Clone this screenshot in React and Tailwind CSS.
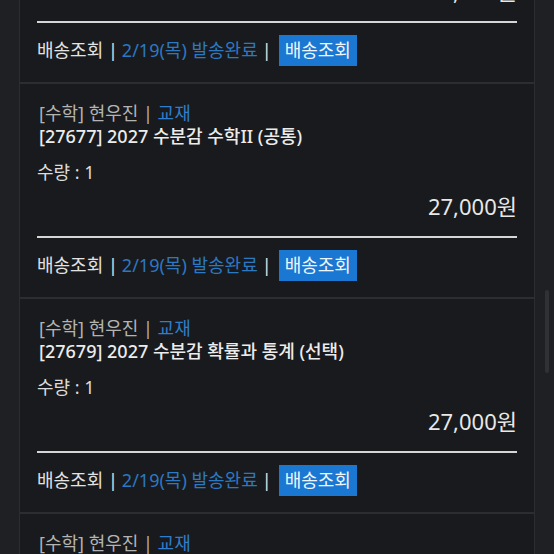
import React from 'react';

const orders = [
  { code: '27676', name: '2027 수분감 수학I (공통)' },
  { code: '27677', name: '2027 수분감 수학II (공통)' },
  { code: '27679', name: '2027 수분감 확률과 통계 (선택)' },
  { code: '27678', name: '2027 수분감 미적분 (선택)' },
];

function OrderCard({ code, name }) {
  return (
    <div className="h-[215px] border border-[#2c2d31] bg-[#191a1d] px-[17px] pt-[18px]">
      <div className="pl-[2px] text-[18px] leading-[23px] text-[#b3b3b3]">
        [수학] 현우진 | <span className="text-[#2f7dcb]">교재</span>
      </div>
      <div className="pl-[2px] text-[18px] leading-[23px] font-medium text-[#ececec]">
        [{code}] {name}
      </div>
      <div className="mt-[12px] text-[18px] leading-[24px] text-[#dcdcdc]">수량 : 1</div>
      <div className="mt-[7px] text-right text-[22px] leading-[30px] text-[#e8e8e8]">27,000원</div>
      <div className="mt-[15px] h-[2px] bg-[#d6d6d6]" />
      <div className="mt-[12px] flex h-[31px] items-center text-[18px] text-[#e2e2e2]">
        <span>배송조회 | </span>
        <span className="ml-[4px] text-[#2c78c2]">2/19(목) 발송완료</span>
        <span className="ml-[4px]"> | </span>
        <button className="ml-[7px] h-[31px] bg-[#1a78d2] px-[6px] text-[18px] leading-[31px] text-[#eef5fc]">
          배송조회
        </button>
      </div>
    </div>
  );
}

export default function App() {
  return (
    <div
      className="flex h-[554px] w-[554px] overflow-hidden bg-[#1f2023]"
      style={{ fontFamily: '"Noto Sans", "Noto Sans CJK KR", sans-serif' }}
    >
      <div className="-mt-[132px] w-[535px] shrink-0 pl-[19px]">
        {orders.map((o) => (
          <OrderCard key={o.code} code={o.code} name={o.name} />
        ))}
      </div>
      <div className="flex-1 pl-[10px] pt-[290px]">
        <div className="h-[83px] w-[4px] rounded-full bg-[#303135]" />
      </div>
    </div>
  );
}
